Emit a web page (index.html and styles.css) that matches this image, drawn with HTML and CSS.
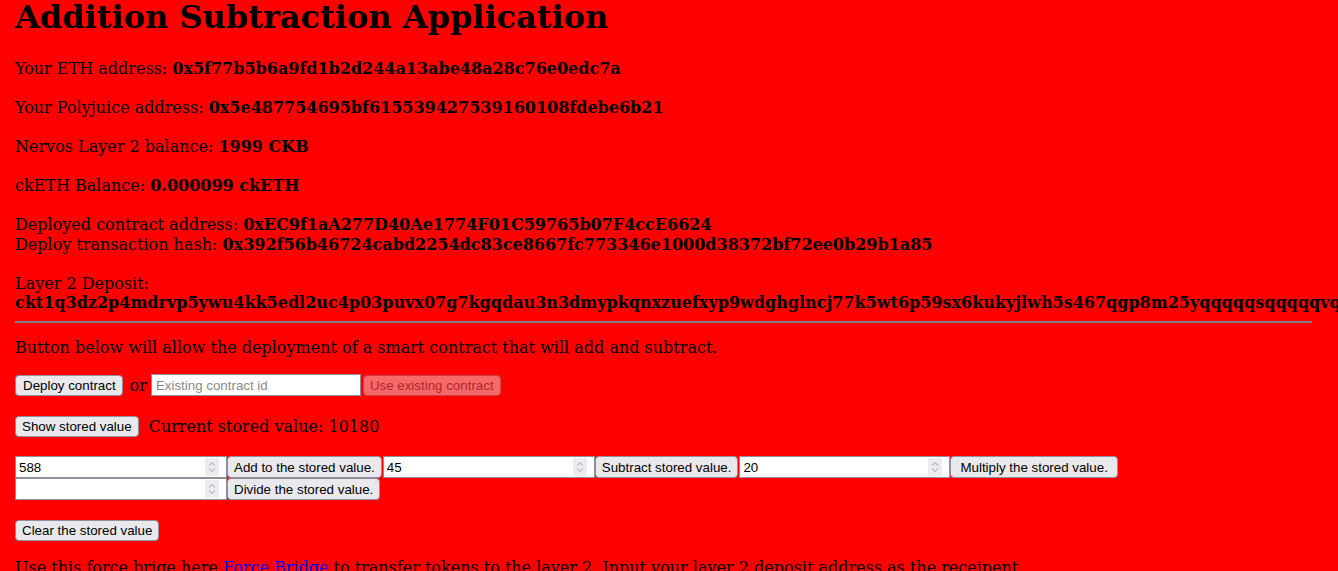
FILE: index.html
```html
<!DOCTYPE html>
<html lang="en">
<head>
<meta charset="utf-8">
<title>Addition Subtraction Application</title>
<link rel="stylesheet" href="styles.css">
</head>
<body>
<div class="app">
  <h1 class="title">Addition Subtraction Application</h1>

  <div class="info">
    <div class="line">Your ETH address: <b>0x5f77b5b6a9fd1b2d244a13abe48a28c76e0edc7a</b></div>
  </div>
  <div class="info">
    <div class="line">Your Polyjuice address: <b>0x5e487754695bf615539427539160108fdebe6b21</b></div>
  </div>
  <div class="info">
    <div class="line">Nervos Layer 2 balance: <b>1999 CKB</b></div>
  </div>
  <div class="info">
    <div class="line">ckETH Balance: <b>0.000099 ckETH</b></div>
  </div>
  <div class="info">
    <div class="line">Deployed contract address: <b>0xEC9f1aA277D40Ae1774F01C59765b07F4ccE6624</b></div>
    <div class="line">Deploy transaction hash: <b>0x392f56b46724cabd2254dc83ce8667fc773346e1000d38372bf72ee0b29b1a85</b></div>
  </div>
  <div class="info">
    <div class="line">Layer 2 Deposit:</div>
    <div class="line"><b>ckt1q3dz2p4mdrvp5ywu4kk5edl2uc4p03puvx07g7kgqdau3n3dmypkqnxzuefxyp9wdghglncj77k5wt6p59sx6kukyjlwh5s467qgp8m25yqqqqqsqqqqqvqqqqqfjqqqqqpq8s2ee4rklfslgaqpfqv3mzf9kz4gm7hqqqqqqqqq</b></div>
  </div>

  <hr class="divider">

  <p class="intro">Button below will allow the deployment of a smart contract that will add and subtract.</p>

  <div class="row">
    <button class="btn btn-deploy">Deploy contract</button>
    <span class="or">or</span>
    <input class="field text-field" type="text" placeholder="Existing contract id">
    <button class="btn btn-gap" disabled>Use existing contract</button>
  </div>

  <div class="row row-stored">
    <button class="btn">Show stored value</button>
    <span class="stored">Current stored value: 10180</span>
  </div>

  <div class="ops">
    <div class="op">
      <span class="num"><span class="num-value">588</span><span class="spin"><svg viewBox="0 0 14 18" width="14" height="18"><path d="M4 7.5 7 4.5 10 7.5M4 10.5 7 13.5 10 10.5" fill="none" stroke="#b9b9c4" stroke-width="1.1"/></svg></span></span>
      <button class="btn btn-op btn-add">Add to the stored value.</button>
    </div>
    <div class="op">
      <span class="num"><span class="num-value">45</span><span class="spin"><svg viewBox="0 0 14 18" width="14" height="18"><path d="M4 7.5 7 4.5 10 7.5M4 10.5 7 13.5 10 10.5" fill="none" stroke="#b9b9c4" stroke-width="1.1"/></svg></span></span>
      <button class="btn btn-op">Subtract stored value.</button>
    </div>
    <div class="op">
      <span class="num num-narrow"><span class="num-value">20</span><span class="spin"><svg viewBox="0 0 14 18" width="14" height="18"><path d="M4 7.5 7 4.5 10 7.5M4 10.5 7 13.5 10 10.5" fill="none" stroke="#b9b9c4" stroke-width="1.1"/></svg></span></span>
      <button class="btn btn-op btn-mul">Multiply the stored value.</button>
    </div>
    <div class="op">
      <span class="num"><span class="num-value"></span><span class="spin"><svg viewBox="0 0 14 18" width="14" height="18"><path d="M4 7.5 7 4.5 10 7.5M4 10.5 7 13.5 10 10.5" fill="none" stroke="#b9b9c4" stroke-width="1.1"/></svg></span></span>
      <button class="btn btn-op btn-add">Divide the stored value.</button>
    </div>
  </div>

  <div class="row row-clear">
    <button class="btn">Clear the stored value</button>
  </div>

  <p class="bridge">Use this force brige here <a href="#" class="link">Force Bridge</a> to transfer tokens to the layer 2. Input your layer 2 deposit address as the receipent.</p>
</div>
</body>
</html>
```

FILE: styles.css
```css
html, body {
  margin: 0;
  padding: 0;
  overflow: hidden;
  background: #ff0000;
}

body {
  font-family: "DejaVu Serif", serif;
  font-size: 16px;
  color: #000;
}

.app {
  padding: 0 26px 0 15px;
}

.title {
  font-size: 32px;
  font-weight: bold;
  line-height: 35px;
  margin: 0 0 24px;
}

.info {
  margin: 0 0 19.5px;
}

.line {
  line-height: 19.5px;
  white-space: nowrap;
}

.divider {
  margin: -11px 0 0;
  border: 0;
  border-top: 2px solid #808080;
  height: 0;
}

.intro {
  margin: 15px 0 17px;
  line-height: 19px;
}

.row {
  display: flex;
  align-items: center;
}

.btn {
  font-family: "Liberation Sans", Arial, sans-serif;
  font-size: 13.333px;
  line-height: 15px;
  height: 21px;
  box-sizing: border-box;
  padding: 2px 6px;
  margin: 0;
  color: #000;
  background: #e9e9ed;
  border: 1px solid #8f8f9d;
  border-radius: 4px;
  white-space: nowrap;
}

.btn-deploy {
  padding: 2px 6px 2px 7px;
}

.btn:disabled {
  opacity: 0.45;
  color: #555;
}

.or {
  margin: 0 4px 0 7px;
  line-height: 19px;
}

.field {
  font-family: "Liberation Sans", Arial, sans-serif;
  font-size: 13.333px;
  box-sizing: border-box;
  height: 22px;
  margin: 0;
  border: 1px solid #8f8f9d;
  background: #fff;
  padding: 2px 4px;
}

.text-field {
  width: 210px;
}

.text-field::placeholder {
  color: #8a8a8a;
}

.btn-gap {
  margin-left: 2px;
}

.row-stored {
  margin-top: 20px;
}

.stored {
  margin-left: 10px;
  line-height: 19px;
}

.ops {
  display: flex;
  flex-wrap: wrap;
  column-gap: 1px;
  margin-top: 19px;
}

.op {
  display: flex;
  align-items: center;
}

.num {
  display: flex;
  align-items: center;
  box-sizing: border-box;
  width: 212px;
  height: 22px;
  border: 1px solid #8f8f9d;
  background: #fff;
  padding: 0 7px 0 3px;
  font-family: "Liberation Sans", Arial, sans-serif;
  font-size: 13.333px;
}

.num-narrow {
  width: 211px;
}

.num-value {
  flex: 1;
}

.spin {
  display: flex;
  width: 14px;
  height: 18px;
  background: #ececf0;
}

.btn-op {
  height: 22px;
}

.btn-add {
  padding: 2px 6px;
}

.btn-mul {
  padding: 2px 9px;
}

.row-clear {
  margin-top: 20px;
}

.bridge {
  margin: 17px 0 0;
  line-height: 19px;
}

.link {
  color: #0000ee;
}
```
